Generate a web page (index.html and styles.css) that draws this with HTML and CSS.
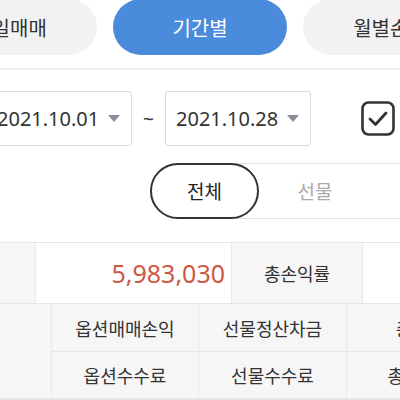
FILE: index.html
```html
<!DOCTYPE html>
<html lang="ko">
<head>
<meta charset="utf-8">
<link rel="stylesheet" href="styles.css">
</head>
<body>
<div class="page">
  <div class="tabs">
    <div class="tab">당일매매</div>
    <div class="tab active">기간별</div>
    <div class="tab">월별손익</div>
  </div>
  <div class="divider"></div>
  <div class="dates">
    <div class="datebox"><span class="date">2021.10.01</span><span class="caret"></span></div>
    <div class="tilde">~</div>
    <div class="datebox"><span class="date">2021.10.28</span><span class="caret"></span></div>
    <svg class="check" width="34" height="35" viewBox="0 0 34 35">
      <rect x="1.5" y="1.5" width="31" height="32" rx="6" fill="none" stroke="#333" stroke-width="2.6"/>
      <path d="M9 18 L14.5 23.5 L25 12" fill="none" stroke="#333" stroke-width="2.8" stroke-linecap="round" stroke-linejoin="round"/>
    </svg>
  </div>
  <div class="seg">
    <div class="seg-item active">전체</div>
    <div class="seg-item">선물</div>
    <div class="seg-item">옵션</div>
  </div>
  <div class="summary">
    <div class="cell label">총손익</div>
    <div class="cell value">5,983,030</div>
    <div class="cell label">총손익률</div>
    <div class="cell value"></div>
  </div>
  <div class="detail">
    <div class="cell label side">구분</div>
    <div class="cell label">옵션매매손익</div>
    <div class="cell label">선물정산차금</div>
    <div class="cell label">총손익</div>
    <div class="cell label">옵션수수료</div>
    <div class="cell label">선물수수료</div>
    <div class="cell label">총수수료</div>
  </div>
</div>
</body>
</html>
```
FILE: styles.css
```css
html, body {
  margin: 0;
  padding: 0;
  background: #fff;
}
body {
  width: 400px;
  height: 400px;
  overflow: hidden;
  font-family: "Noto Sans", "Noto Sans CJK KR", sans-serif;
  color: #333;
}
.page {
  width: 400px;
}
.tabs {
  display: flex;
  gap: 16px;
  margin-left: -77px;
  margin-top: -1px;
}
.tab {
  flex: 0 0 174px;
  height: 56px;
  border-radius: 28px;
  background: #f2f2f2;
  display: flex;
  align-items: center;
  justify-content: center;
  font-size: 20px;
  color: #333;
}
.tab.active {
  background: #4a8bdc;
  color: #fff;
}
.divider {
  margin-top: 13px;
  height: 2px;
  background: #ececec;
}
.dates {
  display: flex;
  align-items: center;
  margin-top: 21px;
  margin-left: -14px;
}
.datebox {
  box-sizing: border-box;
  flex: 0 0 146px;
  height: 55px;
  border: 1px solid #dcdcdc;
  border-radius: 3px;
  display: flex;
  align-items: center;
  padding: 0 10px;
  font-size: 20px;
  color: #333;
}
.caret {
  margin-left: 9px;
  width: 0;
  height: 0;
  border-left: 6.5px solid transparent;
  border-right: 6.5px solid transparent;
  border-top: 7px solid #8a8d99;
}
.tilde {
  flex: 0 0 33px;
  text-align: center;
  font-size: 19px;
  color: #333;
}
.check {
  margin-left: 50px;
  flex: 0 0 auto;
}
.seg {
  box-sizing: border-box;
  display: flex;
  margin-top: 17px;
  margin-left: 150px;
  width: 400px;
  height: 56px;
  border: 1px solid #e2e2e2;
  border-right: none;
  border-radius: 28px 0 0 28px;
}
.seg-item {
  box-sizing: border-box;
  flex: 0 0 112px;
  display: flex;
  align-items: center;
  justify-content: center;
  font-size: 19px;
  color: #aaa;
}
.seg-item.active {
  flex: 0 0 109px;
  height: 56px;
  margin: -1px 0 -1px -1px;
  border: 2px solid #333;
  border-radius: 28px;
  color: #222;
}
.summary {
  display: grid;
  grid-template-columns: 160px 196px 131px 131px;
  margin-top: 23px;
  margin-left: -124px;
  border-top: 1px solid #e6e6e6;
  border-bottom: 1px solid #e6e6e6;
}
.cell {
  box-sizing: border-box;
  display: flex;
  align-items: center;
  justify-content: center;
  border-right: 1px solid #e8e8e8;
  font-size: 18px;
  color: #333;
}
.summary .cell {
  height: 60px;
}
.summary .label {
  background: #f6f6f6;
}
.summary .value {
  background: #fff;
  justify-content: flex-end;
  padding-right: 6px;
  font-size: 25px;
  color: #cf5842;
}
.detail {
  display: grid;
  grid-template-columns: 160px 147px 148px 148px;
  grid-template-rows: 48px 47px;
  margin-left: -108px;
  background: #f6f6f6;
  border-bottom: 1px solid #e6e6e6;
}
.detail .cell {
  border-bottom: 1px solid #e6e6e6;
}
.detail .side {
  grid-row: span 2;
  color: transparent;
}
```
